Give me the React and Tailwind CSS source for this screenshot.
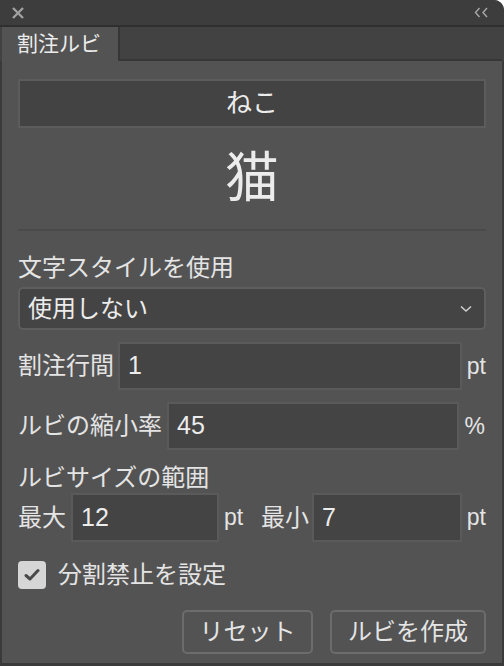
import React from "react";

const font = { fontFamily: '"Liberation Sans", "Noto Sans CJK JP", sans-serif' };

const NumberBox = ({ value, className }) => (
  <div
    className={`h-full bg-[#444444] border-2 border-[#5a5a5a] flex items-center pl-[8px] text-[25px] text-[#ececec] ${className}`}
  >
    {value}
  </div>
);

const App = () => {
  return (
    <div
      style={font}
      className="w-[504px] h-[666px] bg-[#3a3a3a] rounded-tr-[10px] overflow-hidden flex flex-col text-[#e4e4e4]"
    >
      {/* Title bar */}
      <div className="h-[27px] shrink-0 bg-[#3d3d3d] border-b-2 border-[#2f2f2f] flex items-center justify-between pl-[11px] pr-[15px]">
        <svg width="14" height="14" viewBox="0 0 14 14">
          <path d="M2 2 L12 12 M12 2 L2 12" stroke="#a0a0a0" strokeWidth="2.4" />
        </svg>
        <svg width="15" height="11" viewBox="0 0 15 11">
          <path d="M5.5 1 L1.5 5.5 L5.5 10 M13 1 L9 5.5 L13 10" stroke="#a8a8a8" strokeWidth="1.4" fill="none" />
        </svg>
      </div>

      {/* Tab row */}
      <div className="h-[34px] shrink-0 flex bg-[#424242] pl-[2px] pr-[2px]">
        <div className="w-[116px] bg-[#535353] flex items-center pl-[15px] text-[21px] text-[#ececec]">
          割注ルビ
        </div>
        <div className="flex-1 border-b-2 border-l-2 border-[#363636]" />
      </div>

      {/* Panel */}
      <div className="flex-1 mx-[2px] mb-[3px] bg-[#535353] px-[16px] pt-[18px] flex flex-col">
        {/* Ruby text */}
        <div className="h-[49px] bg-[#434343] border-2 border-[#5c5c5c] flex items-center justify-center text-[26px] text-[#ececec]">
          ねこ
        </div>
        {/* Base text */}
        <div className="h-[101px] flex items-center justify-center text-[54px] text-[#ececec]">
          猫
        </div>
        <div className="h-[2px] bg-[#4a4a4a]" />

        {/* Character style */}
        <div className="mt-[22px] h-[30px] flex items-center text-[24px]">文字スタイルを使用</div>
        <div className="mt-[4px] h-[43px] rounded-[5px] bg-[#444444] border-2 border-[#5e5e5e] flex items-center justify-between pl-[8px] pr-[12px] text-[24px] text-[#ececec]">
          <span>使用しない</span>
          <svg width="12" height="8" viewBox="0 0 12 8">
            <path d="M1 1.5 L6 6 L11 1.5" stroke="#cfcfcf" strokeWidth="1.6" fill="none" />
          </svg>
        </div>

        {/* Line gap */}
        <div className="mt-[12px] h-[48px] flex items-center">
          <span className="text-[24px] w-[100px]">割注行間</span>
          <NumberBox value="1" className="w-[344px]" />
          <span className="ml-auto text-[23px]">pt</span>
        </div>

        {/* Ratio */}
        <div className="mt-[12px] h-[48px] flex items-center">
          <span className="text-[24px] w-[149px] whitespace-nowrap">ルビの縮小率</span>
          <NumberBox value="45" className="w-[292px] pl-[6px]" />
          <span className="ml-auto mr-[1px] text-[23px]">%</span>
        </div>

        {/* Size range */}
        <div className="mt-[13px] h-[30px] flex items-center text-[24px]">ルビサイズの範囲</div>
        <div className="h-[49px] flex items-center">
          <span className="text-[24px] w-[53px]">最大</span>
          <NumberBox value="12" className="w-[148px]" />
          <span className="ml-[5px] text-[23px] w-[37px]">pt</span>
          <span className="text-[24px] w-[51px]">最小</span>
          <NumberBox value="7" className="w-[150px]" />
          <span className="ml-auto text-[23px]">pt</span>
        </div>

        {/* Checkbox */}
        <div className="mt-[19px] h-[28px] flex items-center">
          <div className="w-[28px] h-[28px] rounded-[4px] bg-[#d6d6d6] flex items-center justify-center">
            <svg width="16" height="14" viewBox="0 0 16 14">
              <path d="M2 7.5 L6 11 L14 2.5" stroke="#4a4a4a" strokeWidth="3" fill="none" strokeLinecap="round" strokeLinejoin="round" />
            </svg>
          </div>
          <span className="ml-[12px] text-[24px]">分割禁止を設定</span>
        </div>

        {/* Buttons */}
        <div className="mt-[21px] flex justify-end gap-[17px]">
          <button className="w-[131px] h-[44px] rounded-[5px] border-2 border-[#6c6c6c] text-[24px] text-[#e4e4e4]">
            リセット
          </button>
          <button className="w-[156px] h-[44px] rounded-[5px] border-2 border-[#6c6c6c] text-[24px] text-[#e4e4e4]">
            ルビを作成
          </button>
        </div>
      </div>
    </div>
  );
};

export default App;
